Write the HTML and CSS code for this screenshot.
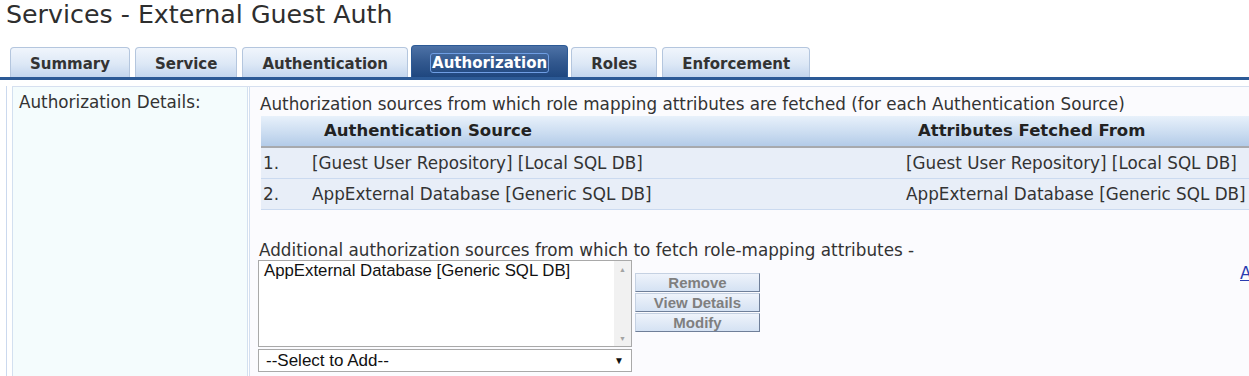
FILE: index.html
```html
<!DOCTYPE html>
<html lang="en">
<head>
  <meta charset="UTF-8">
  <title>Services - External Guest Auth</title>
  <link rel="stylesheet" href="styles.css">
</head>
<body>
  <div id="page">
    <h1>Services - External Guest Auth</h1>
    <ul class="tabs">
      <li class="tab">Summary</li>
      <li class="tab">Service</li>
      <li class="tab">Authentication</li>
      <li class="tab active"><span class="focus">Authorization</span></li>
      <li class="tab">Roles</li>
      <li class="tab">Enforcement</li>
    </ul>
    <div class="panel">
      <div class="form">
        <div class="label">Authorization Details:</div>
        <div class="field">
          <p class="intro">Authorization sources from which role mapping attributes are fetched (for each Authentication Source)</p>
          <table class="sources">
            <colgroup>
              <col class="c-num">
              <col class="c-src">
              <col class="c-attr">
            </colgroup>
            <thead>
              <tr>
                <th colspan="2" class="h-src">Authentication Source</th>
                <th class="h-attr">Attributes Fetched From</th>
              </tr>
            </thead>
            <tbody>
              <tr>
                <td class="num">1.</td>
                <td>[Guest User Repository] [Local SQL DB]</td>
                <td>[Guest User Repository] [Local SQL DB]</td>
              </tr>
              <tr>
                <td class="num">2.</td>
                <td>AppExternal Database [Generic SQL DB]</td>
                <td>AppExternal Database [Generic SQL DB]</td>
              </tr>
            </tbody>
          </table>
          <p class="extra">Additional authorization sources from which to fetch role-mapping attributes -</p>
          <div class="picker">
            <div class="lists">
              <div class="listbox">
                <div class="options">
                  <div class="option">AppExternal Database [Generic SQL DB]</div>
                </div>
                <div class="scroll">
                  <span class="arrow">&#9650;</span>
                  <span class="arrow">&#9660;</span>
                </div>
              </div>
              <div class="dropdown">
                <span>--Select to Add--</span>
                <span class="caret">&#9660;</span>
              </div>
            </div>
            <div class="buttons">
              <button class="btn" disabled>Remove</button>
              <button class="btn" disabled>View Details</button>
              <button class="btn" disabled>Modify</button>
            </div>
            <a class="add-link" href="#">Add new Authorization Source</a>
          </div>
        </div>
      </div>
    </div>
  </div>
</body>
</html>
```

FILE: styles.css
```css
html {
  overflow: hidden;
}
body {
  margin: 0;
  background: #fff;
  color: #333;
  font-family: "DejaVu Sans", Verdana, sans-serif;
  font-size: 16.8px;
}
#page {
  width: 1400px;
}
h1 {
  margin: 0;
  padding-left: 6px;
  font-size: 25.3px;
  font-weight: normal;
  line-height: 30px;
  color: #2e2e2e;
}

/* tabs */
.tabs {
  display: flex;
  align-items: flex-end;
  gap: 5px;
  list-style: none;
  margin: 15px 0 0;
  padding: 0 0 0 10px;
  border-bottom: 3px solid #2c5a96;
}
.tab {
  height: 29px;
  line-height: 33px;
  padding: 0 19px;
  font-weight: bold;
  font-size: 15px;
  color: #333;
  border: 1px solid #b4c6de;
  border-bottom: 0;
  border-radius: 4px 4px 0 0;
  background: linear-gradient(#f0f5fc, #dde8f6 55%, #c3d6ee);
}
.tab.active {
  color: #fff;
  border-color: #2c5a96;
  background: linear-gradient(#4d72a6, #33598f 50%, #1f477f);
  line-height: normal;
  display: flex;
  align-items: center;
  margin: 0 -2px;
  padding: 2px 18px 0;
}
.focus {
  border: 1px solid #6f9ee4;
  border-radius: 3px;
  padding: 0 1px;
  line-height: 18px;
}

/* panel */
.panel {
  margin: 6px 0 0 6px;
  padding: 0 0 0 5px;
  border-left: 1px solid #cbd9ee;
}
.form {
  display: grid;
  grid-template-columns: 236px 1fr;
  gap: 1px;
  border-top: 1px solid #d6e0f0;
  min-height: 300px;
}
.label {
  background: #f4fcfd;
  border-left: 1px solid #d3e0f0;
  border-right: 1px solid #d3e0f0;
  padding: 5px 6px;
  line-height: 20px;
}
.field {
  background: #fbfbfe;
  border-left: 1px solid #d3e0f0;
  padding: 7px 0 0 11px;
}
.intro {
  margin: 0 0 2px -1px;
  line-height: 20px;
}

/* sources table */
.sources {
  border-collapse: collapse;
  width: 1100px;
  table-layout: fixed;
}
.c-num { width: 51px; }
.c-src { width: 594px; }
.sources th {
  height: 30px;
  padding: 0;
  text-align: left;
  font-size: 16.5px;
  line-height: 20px;
  color: #222;
  background: linear-gradient(#e8f1fb, #c9dbf0 60%, #b3cbe8);
  border-bottom: 2px solid #a7a9ad;
}
.sources .h-src { padding-left: 63px; }
.sources .h-attr { padding-left: 12px; }
.sources td {
  height: 29px;
  padding: 0 0 1px;
  line-height: 20px;
  background: #e8eef8;
  border-bottom: 1px solid #cbdaf0;
}
.sources td.num { padding-left: 2px; }

.extra {
  margin: 30px 0 0 -2px;
  line-height: 20px;
}

/* picker */
.picker {
  display: flex;
  align-items: flex-start;
  margin: 0 0 0 -3px;
}
.lists {
  display: flex;
  flex-direction: column;
  gap: 2px;
}
.listbox {
  display: flex;
  width: 372px;
  height: 85px;
  border: 1px solid #a9a9a9;
  background: #fff;
  font-family: "Liberation Sans", Arial, sans-serif;
  font-size: 16.8px;
  color: #111;
}
.options {
  flex: 1;
  padding: 0 5px;
}
.scroll {
  width: 17px;
  background: #f1f1f1;
  display: flex;
  flex-direction: column;
  justify-content: space-between;
  align-items: center;
  padding: 5px 0 4px;
}
.arrow {
  font-size: 7px;
  color: #a3a3a3;
}
.dropdown {
  display: flex;
  justify-content: space-between;
  align-items: center;
  width: 358px;
  height: 21px;
  padding: 0 7px;
  border: 1px solid #a9a9a9;
  background: #fff;
  font-family: "Liberation Sans", Arial, sans-serif;
  font-size: 17px;
  color: #111;
}
.caret {
  font-size: 10px;
  color: #111;
}
.buttons {
  display: flex;
  flex-direction: column;
  gap: 1px;
  margin: 13px 0 0 3px;
}
.btn {
  width: 125px;
  height: 19px;
  padding: 0;
  font-family: "Liberation Sans", Arial, sans-serif;
  font-weight: bold;
  font-size: 15px;
  line-height: 15px;
  color: #7f7f7f;
  background: linear-gradient(#eef3fb, #d5e2f3);
  border: 1px solid;
  border-color: #c5d1e2 #6f7f99 #6f7f99 #c5d1e2;
}
.add-link {
  margin: 3px 0 0 480px;
  color: #2a3bb0;
  white-space: nowrap;
}
```
